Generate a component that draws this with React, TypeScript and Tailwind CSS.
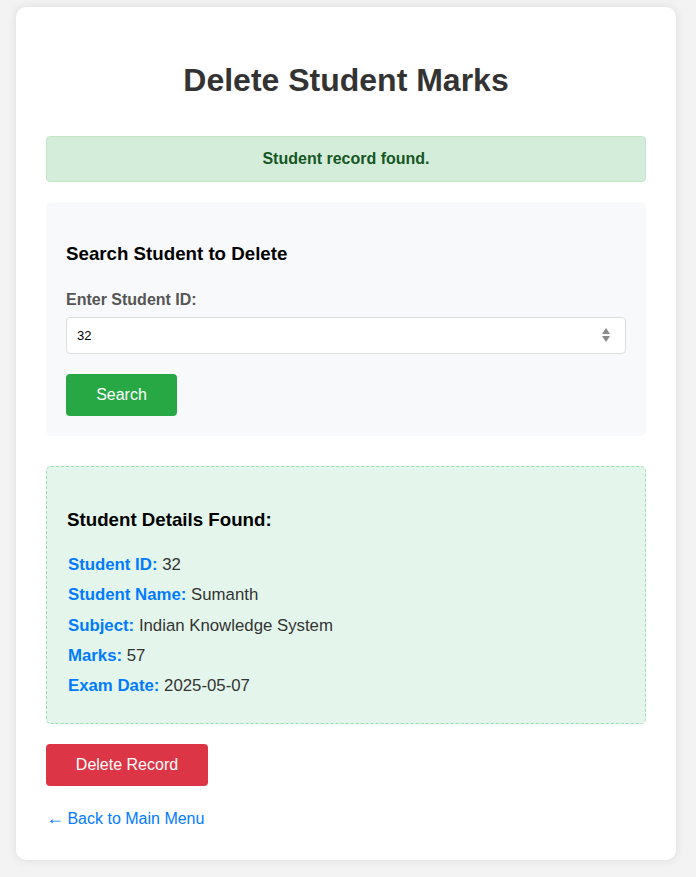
export default function App() {
  const details = [
    { label: "Student ID:", value: "32" },
    { label: "Student Name:", value: "Sumanth" },
    { label: "Subject:", value: "Indian Knowledge System" },
    { label: "Marks:", value: "57" },
    { label: "Exam Date:", value: "2025-05-07" },
  ];

  return (
    <div className="min-h-[877px] bg-[#f3f3f3] px-4 pt-[7px] pb-[18px] font-['Liberation_Sans',Arial,sans-serif]">
      <div className="w-[660px] rounded-[10px] bg-white px-[30px] pt-[30px] pb-[29px] shadow-[0_0_10px_rgba(0,0,0,0.1)]">
        <h1 className="mt-[25px] mb-[37px] text-center text-[32px] leading-[37px] font-bold text-[#333]">
          Delete Student Marks
        </h1>

        <div className="rounded-[4px] border border-[#c3e6cb] bg-[#d4edda] py-3 text-center text-base leading-5 font-bold text-[#155724]">
          Student record found.
        </div>

        {/* search form */}
        <div className="mt-5 rounded-[5px] bg-[#f8f9fa] px-5 pt-5 pb-5">
          <h3 className="mt-[21px] mb-[26px] text-[18.72px] leading-[21.5px] font-bold text-black">
            Search Student to Delete
          </h3>
          <label className="mb-2 block text-base leading-[18px] font-bold text-[#555]">
            Enter Student ID:
          </label>
          <div className="relative">
            <input
              type="text"
              defaultValue="32"
              className="block h-[37px] w-full rounded-[4px] border border-[#ddd] bg-white px-[10px] text-[13px] text-black outline-none"
            />
            <svg
              className="absolute top-1/2 right-[15px] -translate-y-1/2"
              width="10"
              height="16"
              viewBox="0 0 10 16"
            >
              <path d="M5 1 L9 7 L1 7 Z" fill="#8a8a8a" />
              <path d="M5 15 L9 9 L1 9 Z" fill="#8a8a8a" />
            </svg>
          </div>
          <button className="mt-5 h-[42px] w-[111px] rounded-[4px] bg-[#28a745] text-base text-white">
            Search
          </button>
        </div>

        {/* found record */}
        <div className="mt-[30px] rounded-[5px] border border-dashed border-[#9fdcb1] bg-[#e4f6eb] px-5 pt-5 pb-[22px]">
          <h3 className="mt-[22px] mb-[20px] text-[18.72px] leading-[21.5px] font-bold text-black">
            Student Details Found:
          </h3>
          {details.map((d) => (
            <p key={d.label} className="pl-[1px] text-[16.8px] leading-[30.25px] text-[#333]">
              <strong className="text-[#007bff]">{d.label}</strong> {d.value}
            </p>
          ))}
        </div>

        <button className="mt-[20px] h-[42px] w-[162px] rounded-[4px] bg-[#dc3545] text-base text-white">
          Delete Record
        </button>

        <div className="mt-[21px]">
          <a href="#" className="text-base leading-[18px] text-[#007bff]">
            <span className="inline-block w-[17px] text-[18px]">←</span> Back to Main Menu
          </a>
        </div>
      </div>
    </div>
  );
}
